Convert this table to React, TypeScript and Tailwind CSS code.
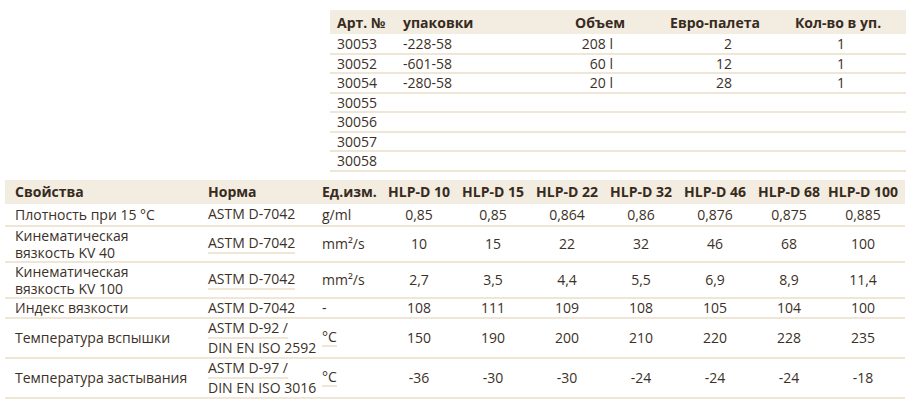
import React from 'react';

const packs = [
  { art: '30053', pack: '-228-58', vol: '208 l', pal: '2', qty: '1' },
  { art: '30052', pack: '-601-58', vol: '60 l', pal: '12', qty: '1' },
  { art: '30054', pack: '-280-58', vol: '20 l', pal: '28', qty: '1' },
  { art: '30055', pack: '', vol: '', pal: '', qty: '' },
  { art: '30056', pack: '', vol: '', pal: '', qty: '' },
  { art: '30057', pack: '', vol: '', pal: '', qty: '' },
  { art: '30058', pack: '', vol: '', pal: '', qty: '' },
];

const grades = ['HLP-D 10', 'HLP-D 15', 'HLP-D 22', 'HLP-D 32', 'HLP-D 46', 'HLP-D 68', 'HLP-D 100'];

// tall: norm text is underlined inside the cell, not only by the row line
const props = [
  { name: ['Плотность при 15 °C'], norm: ['ASTM D-7042'], unit: 'g/ml', tall: false, h: 'h-[22px]', vals: ['0,85', '0,85', '0,864', '0,86', '0,876', '0,875', '0,885'] },
  { name: ['Кинематическая', 'вязкость KV 40'], norm: ['ASTM D-7042'], unit: 'mm²/s', tall: true, h: 'h-[36px]', vals: ['10', '15', '22', '32', '46', '68', '100'] },
  { name: ['Кинематическая', 'вязкость KV 100'], norm: ['ASTM D-7042'], unit: 'mm²/s', tall: true, h: 'h-[35px]', vals: ['2,7', '3,5', '4,4', '5,5', '6,9', '8,9', '11,4'] },
  { name: ['Индекс вязкости'], norm: ['ASTM D-7042'], unit: '-', tall: false, h: 'h-[20px]', vals: ['108', '111', '109', '108', '105', '104', '100'] },
  { name: ['Температура вспышки'], norm: ['ASTM D-92 /', 'DIN EN ISO 2592'], unit: '°C', tall: false, h: 'h-[40px]', vals: ['150', '190', '200', '210', '220', '228', '235'] },
  { name: ['Температура застывания'], norm: ['ASTM D-97 /', 'DIN EN ISO 3016'], unit: '°C', tall: false, h: 'h-[40px]', vals: ['-36', '-30', '-30', '-24', '-24', '-24', '-18'] },
];

const line = 'border-b-2 border-[#efe6d6]';

export default function App() {
  return (
    <div className="w-[909px] h-[405px] bg-white text-[#3b3126] text-[14px] font-['Open_Sans',sans-serif] leading-[17px] pt-[10px]">
      <table className="ml-[330px] w-[576px] table-fixed border-collapse">
        <colgroup>
          <col className="w-[65px]" />
          <col className="w-[165px]" />
          <col className="w-[90px]" />
          <col className="w-[130px]" />
          <col className="w-[126px]" />
        </colgroup>
        <thead>
          <tr className="h-[24px] bg-[#f2ece1] font-bold text-[#382b1d]">
            <th className="pl-[7px] text-left">Арт. №</th>
            <th className="pl-[8px] text-left">упаковки</th>
            <th className="pr-[25px] text-right">Объем</th>
            <th className="text-center">Евро-палета</th>
            <th className="pr-[10px] text-center">Кол-во в уп.</th>
          </tr>
        </thead>
        <tbody>
          {packs.map((p) => (
            <tr key={p.art} className={`h-[19.5px] ${line}`}>
              <td className="pl-[7px]">{p.art}</td>
              <td className="pl-[8px]">{p.pack}</td>
              <td className="pr-[37px] text-right">{p.vol}</td>
              <td className="pr-[48px] text-right">{p.pal}</td>
              <td className="pr-[4px] text-center">{p.qty}</td>
            </tr>
          ))}
        </tbody>
      </table>

      <table className="ml-[5px] mt-[8px] w-[900px] table-fixed border-collapse">
        <colgroup>
          <col className="w-[195px]" />
          <col className="w-[115px]" />
          <col className="w-[67px]" />
          {grades.map((g, i) => (
            <col key={g} className={i === 6 ? 'w-[79px]' : 'w-[74px]'} />
          ))}
        </colgroup>
        <thead>
          <tr className="h-[24px] bg-[#f2ece1] font-bold text-[#382b1d]">
            <th className="pl-[10px] text-left">Свойства</th>
            <th className="pl-[8px] text-left">Норма</th>
            <th className="pl-[7px] text-left whitespace-nowrap">Ед.изм.</th>
            {grades.map((g, i) => (
              <th key={g} className={`text-center whitespace-nowrap ${i === 6 ? 'pr-[5px]' : ''}`}>{g}</th>
            ))}
          </tr>
        </thead>
        <tbody>
          {props.map((r) => (
            <tr key={r.name.join(' ')} className={`${r.h} ${line}`}>
              <td className="pl-[10px] leading-[17px] whitespace-nowrap">
                {r.name.map((n) => (
                  <div key={n}>{n}</div>
                ))}
              </td>
              <td className="pl-[8px]">
                <div className="flex flex-col items-start">
                  {r.norm.map((n, i) => (
                    <span
                      key={n}
                      className={`whitespace-nowrap leading-[18px] ${
                        r.tall || (r.norm.length > 1 && i === 0) ? line : ''
                      }`}
                    >
                      {n}
                    </span>
                  ))}
                </div>
              </td>
              <td className="pl-[7px]">
                <span className={r.unit === '°C' ? `inline-block leading-[16px] ${line}` : ''}>{r.unit}</span>
              </td>
              {r.vals.map((v, i) => (
                <td key={i} className={`text-center ${i === 6 ? 'pr-[5px]' : ''}`}>
                  {v}
                </td>
              ))}
            </tr>
          ))}
        </tbody>
      </table>
    </div>
  );
}
